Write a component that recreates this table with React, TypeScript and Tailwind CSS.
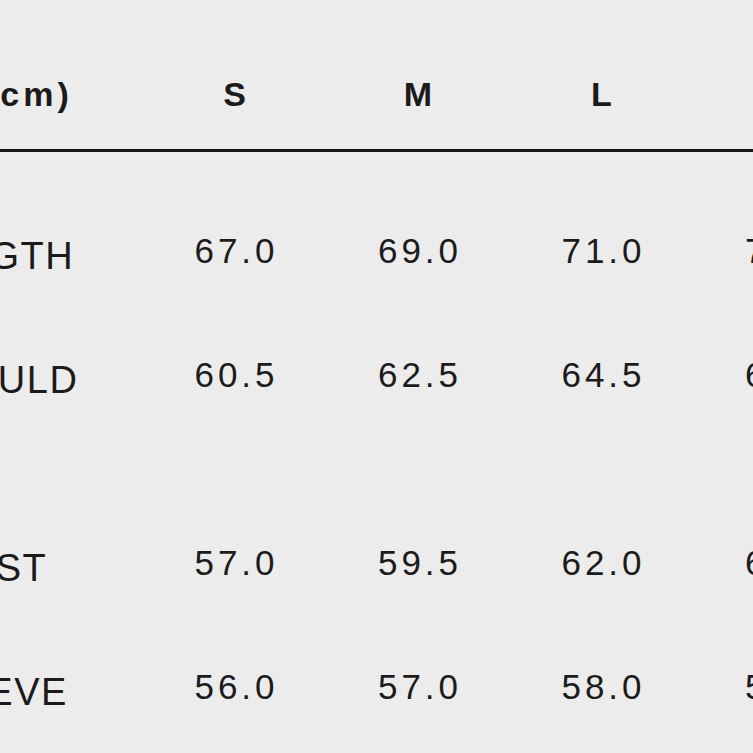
const sizes = ['S', 'M', 'L', 'XL'];

const rows = [
  { label: 'LENGTH', values: ['67.0', '69.0', '71.0', '73.0'] },
  { label: 'SHOULD', values: ['60.5', '62.5', '64.5', '66.5'], extra: true },
  { label: 'CHEST', values: ['57.0', '59.5', '62.0', '64.5'] },
  { label: 'SLEEVE', values: ['56.0', '57.0', '58.0', '59.0'] },
];

export default function App() {
  return (
    <div
      className="w-[753px] h-[753px] overflow-hidden bg-[#ececec] text-[#1b1b1b]"
      style={{ fontFamily: '"Liberation Sans", Arial, sans-serif' }}
    >
      <div className="pt-[64px]">
        <div className="flex h-[60px] items-center ml-[-89px] whitespace-nowrap">
          <div className="w-[231.75px] shrink-0 overflow-visible">
            <div className="ml-[-31px] text-[34px] font-bold tracking-[4px] leading-none">SIZE (cm)</div>
          </div>
          {sizes.map(s => (
            <div key={s} className="w-[183.5px] shrink-0 text-center text-[34px] font-bold leading-none">
              {s}
            </div>
          ))}
        </div>
        <div className="mt-[25px] h-[3px] bg-[#151515]" />
        <div className="pt-[36px]">
          {rows.map(row => (
            <div key={row.label} className={row.extra ? 'pb-[64px]' : ''}>
              <div className="flex h-[124px] items-center ml-[-89px] whitespace-nowrap">
                <div className="w-[231.75px] shrink-0 pt-[12px] text-[38px] tracking-[1.5px] leading-none">
                  {row.label}
                </div>
                {row.values.map((v, i) => (
                  <div
                    key={i}
                    className="w-[183.5px] shrink-0 text-center text-[35px] tracking-[4px] leading-none pl-[4px]"
                  >
                    {v}
                  </div>
                ))}
              </div>
            </div>
          ))}
        </div>
      </div>
    </div>
  );
}
